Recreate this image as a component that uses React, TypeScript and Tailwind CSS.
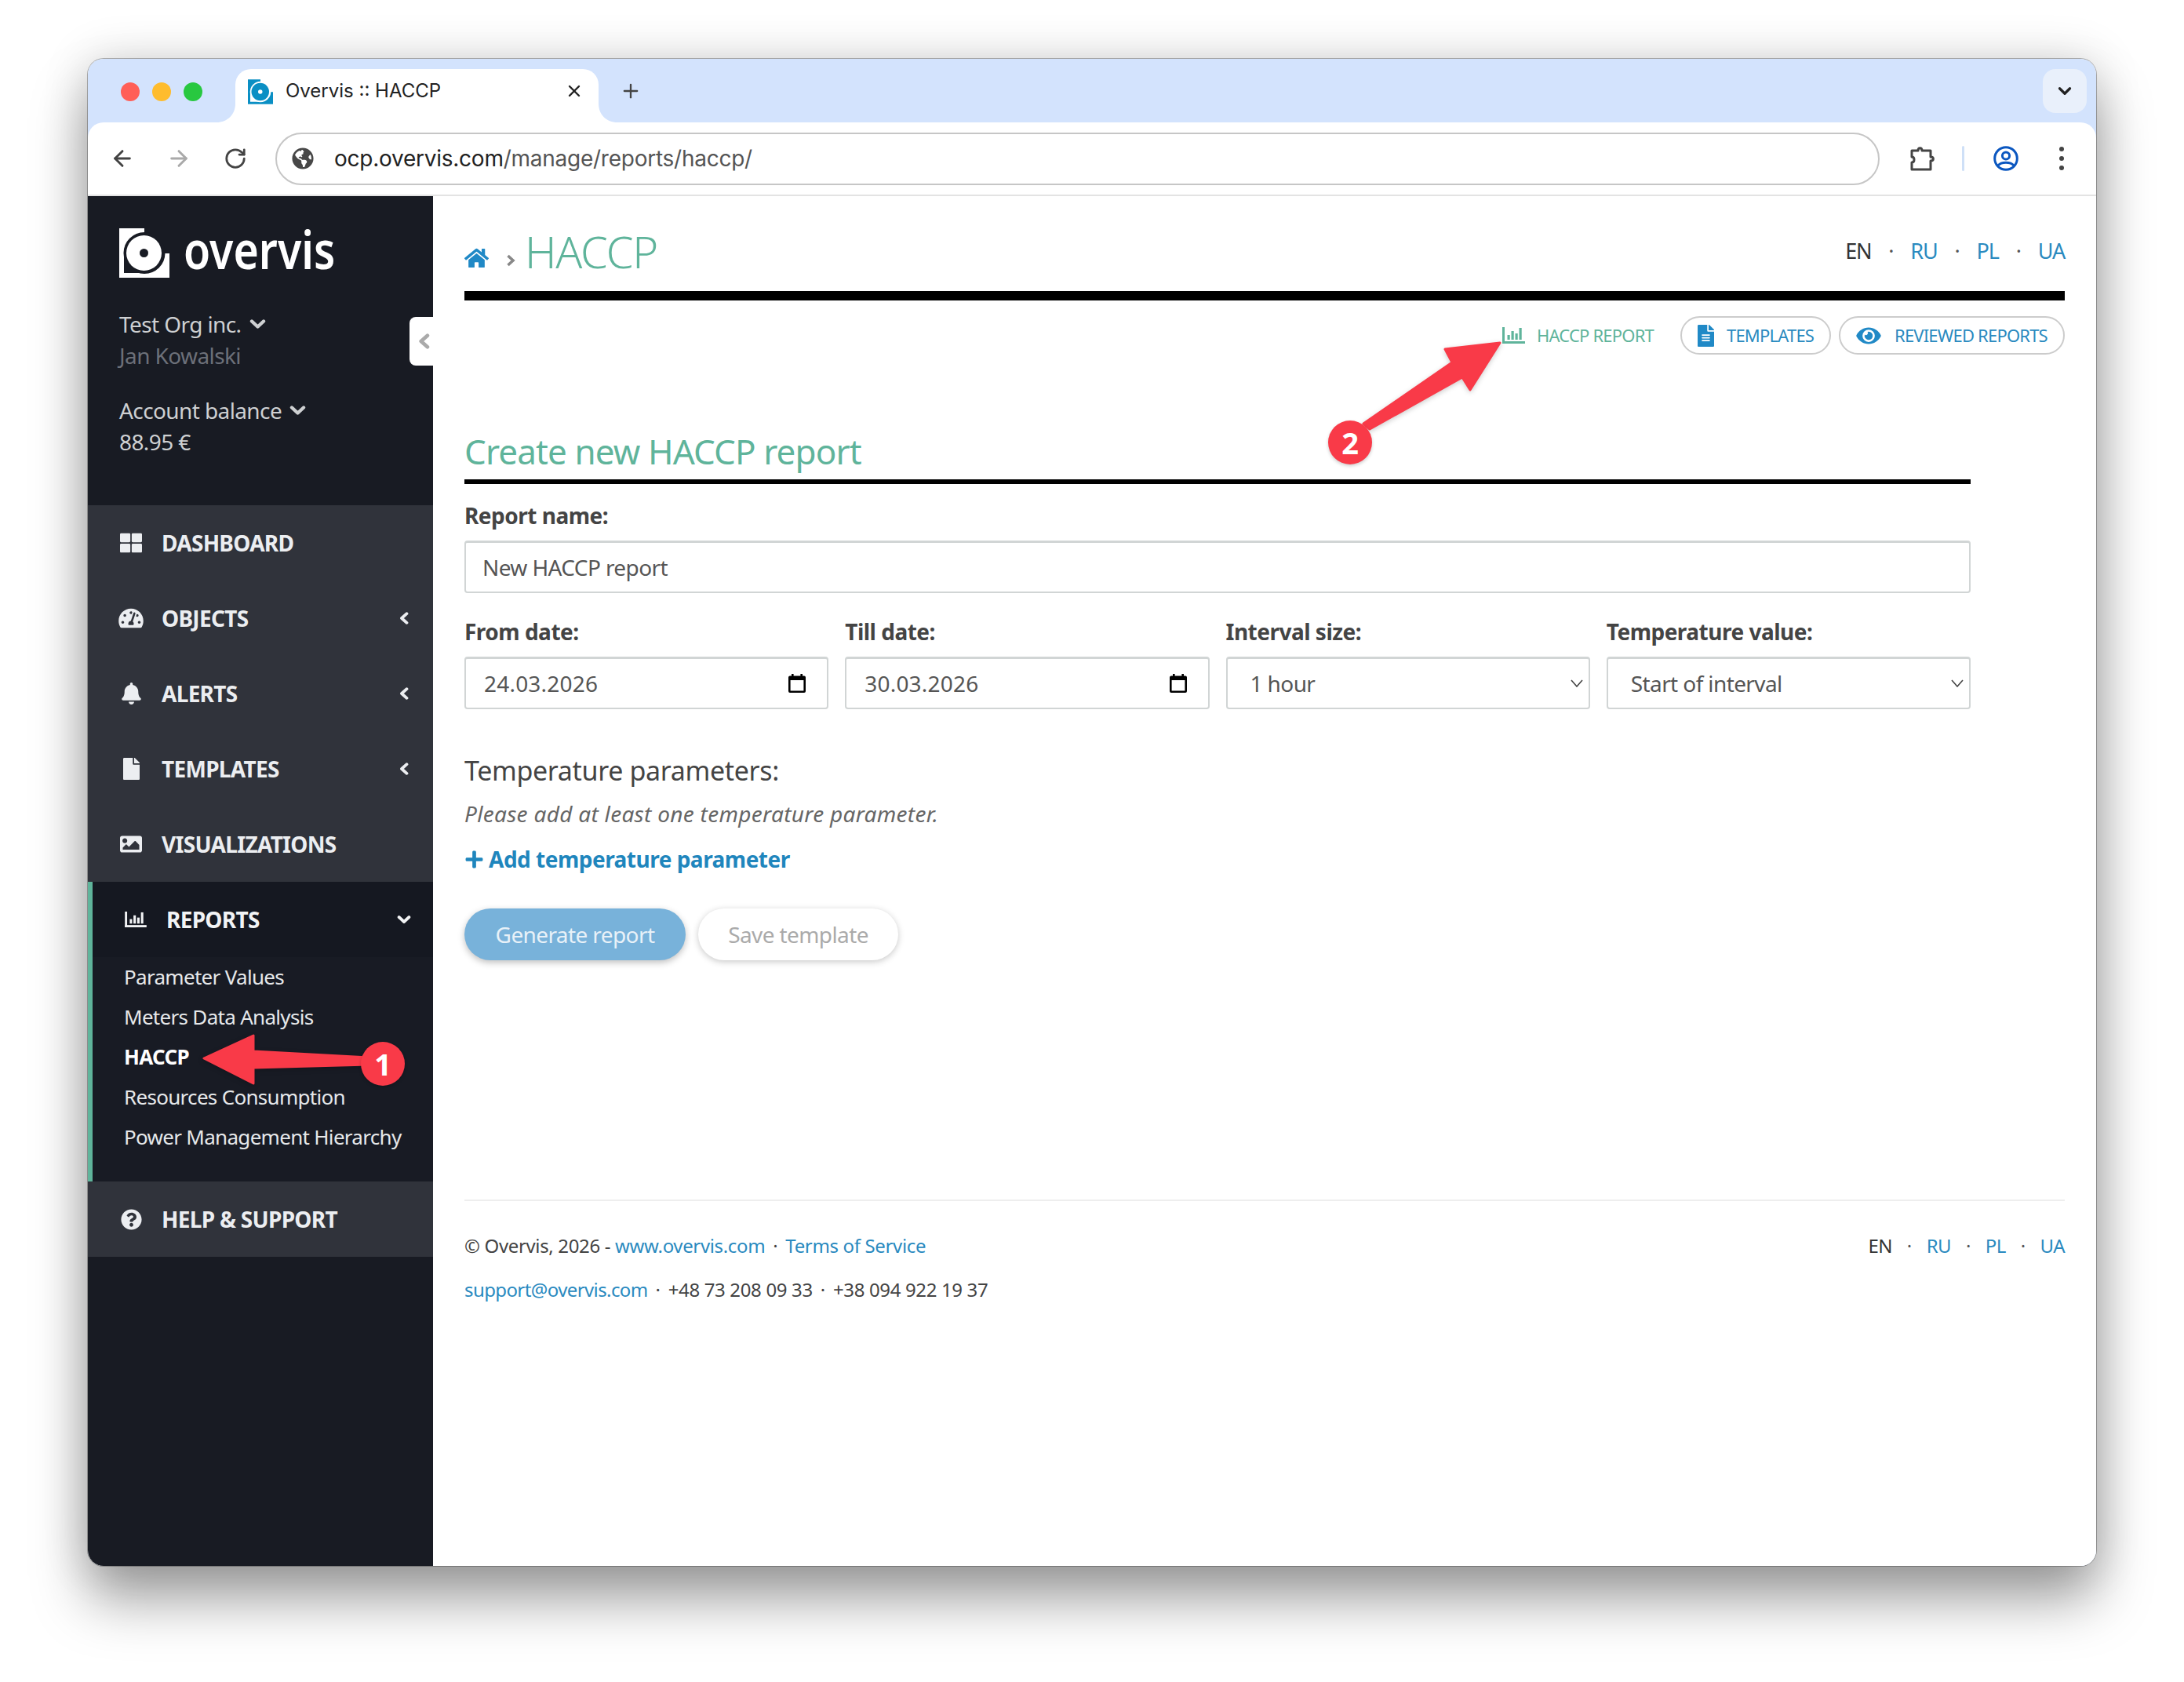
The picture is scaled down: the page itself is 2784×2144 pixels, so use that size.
import React from "react";
import {
  FaThLarge, FaTachometerAlt, FaBell, FaFile, FaImage, FaQuestionCircle,
  FaHome, FaFileAlt, FaEye, FaPlus, FaGlobeAmericas,
} from "react-icons/fa";
import { ArrowLeft, ArrowRight, RotateCw, X, Plus, ChevronDown } from "lucide-react";

function LogoMark({ fg, bg, className }: { fg: string; bg: string; className: string }) {
  return (
    <svg viewBox="0 0 64 63" className={className}>
      <path d="M0 0H32V32H64V63H0Z" fill={fg} />
      <circle cx="32" cy="31.5" r="26.5" fill={bg} />
      <rect x="6" y="31" width="26" height="26" fill={bg} />
      <circle cx="31.5" cy="31.5" r="22.5" fill={fg} />
      <circle cx="31.5" cy="31.5" r="5.5" fill={bg} />
    </svg>
  );
}

function BarsIcon({ className }: { className: string }) {
  return (
    <svg viewBox="0 0 29 21" className={className} fill="currentColor">
      <rect x="0" y="0" width="3" height="21" />
      <rect x="0" y="18" width="29" height="3" />
      <rect x="6.5" y="10" width="3.2" height="6" />
      <rect x="11.5" y="5" width="3.2" height="11" />
      <rect x="16.5" y="8" width="3.2" height="8" />
      <rect x="21.5" y="1" width="3.2" height="15" />
    </svg>
  );
}

function CalendarIcon() {
  return (
    <svg viewBox="0 0 22 24" className="w-[22px] h-[24px] shrink-0" fill="#000">
      <rect x="4" y="0" width="2.6" height="4" />
      <rect x="15.4" y="0" width="2.6" height="4" />
      <path fillRule="evenodd" d="M2 2.5H20A2 2 0 0 1 22 4.5V22A2 2 0 0 1 20 24H2A2 2 0 0 1 0 22V4.5A2 2 0 0 1 2 2.5ZM2.6 8V21.4H19.4V8Z" />
    </svg>
  );
}

function ChevLeft({ className }: { className: string }) {
  return (
    <svg viewBox="0 0 12 16" className={className} fill="none" stroke="currentColor" strokeWidth="3.8" strokeLinecap="round" strokeLinejoin="round">
      <path d="M9.5 2.2L3 8L9.5 13.8" />
    </svg>
  );
}

function ChevDown({ className }: { className: string }) {
  return (
    <svg viewBox="0 0 21 14" className={className} fill="none" stroke="currentColor" strokeWidth="4.4" strokeLinecap="round" strokeLinejoin="round">
      <path d="M3 3.5L10.5 10.5L18 3.5" />
    </svg>
  );
}

function MenuItem({ icon, label, chevron }: { icon: React.ReactNode; label: string; chevron?: boolean }) {
  return (
    <div className="h-[96px] bg-[#30333b] flex items-center pl-[40px] pr-[31px]">
      <div className="w-[30px] flex justify-center shrink-0">{icon}</div>
      <span className="ml-[24px] text-[28px] font-bold tracking-[-0.7px] text-[#eceef1]">{label}</span>
      {chevron && <ChevLeft className="ml-auto w-[12px] h-[16px] text-[#eceef1]" />}
    </div>
  );
}

function Field({ label, value, kind }: { label: string; value: string; kind: "date" | "select" }) {
  return (
    <div>
      <div className="h-[40px] leading-[40px] text-[28px] font-bold tracking-[-0.5px] text-[#444]">{label}</div>
      <div className={"mt-[12px] h-[67px] rounded-[4px] border-2 border-[#d1d5d5] border-t-[3px] flex items-center bg-white " + (kind === "date" ? "pl-[23px] pr-[27px]" : "pl-[29px] pr-[7px]")}>
        <span className={"text-[28px] text-[#555] " + (kind === "date" ? "tracking-[0.2px]" : "")}>{value}</span>
        <div className="ml-auto">
          {kind === "date" ? (
            <CalendarIcon />
          ) : (
            <svg viewBox="0 0 16 10" className="w-[16px] h-[10px]" fill="none" stroke="#444" strokeWidth="1.6"><path d="M1 1L8 9L15 1" /></svg>
          )}
        </div>
      </div>
    </div>
  );
}

function Lang({ size, gap, className }: { size: string; gap: string; className?: string }) {
  const dot = <span className="text-[#555]">·</span>;
  const link = "text-[#2a8abf]";
  return (
    <div className={`flex items-center ${size} ${gap} ${className ?? ""}`}>
      <span className="text-[#333]">EN</span>
      {dot}
      <span className={link}>RU</span>
      {dot}
      <span className={link}>PL</span>
      {dot}
      <span className={link}>UA</span>
    </div>
  );
}

function SubItem({ label, bold }: { label: string; bold?: boolean }) {
  return (
    <div className={"h-[51px] leading-[51px] text-[26px] tracking-[-0.7px] " + (bold ? "font-bold text-white" : "text-[#e6e8ea]")}>{label}</div>
  );
}

export default function App() {
  return (
    <div className="relative w-[2784px] h-[2144px] bg-white overflow-hidden pl-[112px] pt-[75px] tracking-[-0.6px] font-['Noto_Sans',sans-serif]">
      <div className="w-[2560px] h-[1921px] rounded-[20px] shadow-[0_44px_70px_rgba(0,0,0,0.36),0_0_60px_rgba(0,0,0,0.16),0_0_0_1px_rgba(0,0,0,0.28)]">
        <div className="w-full h-full rounded-[20px] overflow-hidden bg-[#d3e3fd] flex flex-col">
          {/* tab strip */}
          <div className="h-[81px] shrink-0 flex pt-[13px] relative tracking-normal">
            <div className="flex items-center gap-[16px] pl-[42px] h-[58px]">
              <span className="w-[24px] h-[24px] rounded-full bg-[#ff5f57]" />
              <span className="w-[24px] h-[24px] rounded-full bg-[#febc2e]" />
              <span className="w-[24px] h-[24px] rounded-full bg-[#28c840]" />
            </div>
            <div className="relative ml-[42px] w-[463px] h-[68px] bg-white rounded-t-[20px] flex items-start pt-[13px] pl-[16px] pr-[19px] font-['Inter',sans-serif]">
              <LogoMark fg="#0a8fc4" bg="#ffffff" className="w-[32px] h-[32px] shrink-0" />
              <span className="ml-[16px] text-[24px] leading-[30px] text-[#222]">Overvis :: HACCP</span>
              <X className="ml-auto mt-[3px] w-[24px] h-[24px] text-[#222]" strokeWidth={2.4} />
              <svg viewBox="0 0 24 24" className="absolute bottom-0 left-[-24px] w-[24px] h-[24px]"><path d="M24 0V24H0C14 24 24 14 24 0Z" fill="#fff" /></svg>
              <svg viewBox="0 0 24 24" className="absolute bottom-0 right-[-24px] w-[24px] h-[24px]"><path d="M0 0V24H24C10 24 0 14 0 0Z" fill="#fff" /></svg>
            </div>
            <div className="ml-[27px] h-[56px] flex items-center">
              <Plus className="w-[28px] h-[28px] text-[#444]" strokeWidth={2} />
            </div>
            <div className="ml-auto mr-[12px] w-[56px] h-[56px] rounded-[16px] bg-[#e9f0fb] flex items-center justify-center">
              <ChevronDown className="w-[26px] h-[26px] text-[#222]" strokeWidth={3} />
            </div>
          </div>
          {/* toolbar */}
          <div className="h-[94px] shrink-0 bg-white rounded-t-[20px] border-b-2 border-[#e3e3e3] flex items-center pl-[28px] pr-[41px] relative tracking-normal">
            <ArrowLeft className="w-[32px] h-[32px] text-[#444]" strokeWidth={2.2} />
            <ArrowRight className="ml-[40px] w-[32px] h-[32px] text-[#aaa]" strokeWidth={2.2} />
            <RotateCw className="ml-[41px] w-[30px] h-[30px] text-[#444]" strokeWidth={2.2} />
            <div className="ml-[36px] w-[2045px] h-[67px] rounded-full border-2 border-[#c6c6c6] flex items-center pl-[19px]">
              <FaGlobeAmericas className="w-[28px] h-[28px] text-[#474747]" />
              <span className="ml-[26px] text-[28px] font-['Inter',sans-serif] text-[#222] tracking-[-0.25px]">
                ocp.overvis.com<span className="text-[#555]">/manage/reports/haccp/</span>
              </span>
            </div>
            <svg viewBox="0 0 32 32" className="ml-[38px] w-[32px] h-[32px]" fill="none" stroke="#444" strokeWidth="3" strokeLinejoin="round">
              <path d="M3 6H11C11 1.5 16 1.5 16 6H27V14C31.5 14 31.5 19 27 19V30H3V21C7 21 7 14 3 14Z" />
            </svg>
            <div className="ml-[35px] w-[3px] h-[32px] rounded-full bg-[#cfe0f7]" />
            <svg viewBox="0 0 32 32" className="ml-[37px] w-[32px] h-[32px]" fill="none" stroke="#0b57c0" strokeWidth="3">
              <circle cx="16" cy="16" r="14.3" />
              <circle cx="16" cy="12.5" r="4.6" />
              <path d="M6 25C10 20 22 20 26 25" />
            </svg>
            <div className="ml-auto flex flex-col gap-[6px]">
              <span className="w-[6px] h-[6px] rounded-full bg-[#444]" />
              <span className="w-[6px] h-[6px] rounded-full bg-[#444]" />
              <span className="w-[6px] h-[6px] rounded-full bg-[#444]" />
            </div>
          </div>
          {/* page */}
          <div className="flex flex-1 bg-white min-h-0">
            <aside className="relative w-[440px] shrink-0 bg-[#181b23] flex flex-col">
              <div className="absolute right-0 top-[154px] w-[30px] h-[62px] bg-white rounded-l-[8px] flex items-center justify-center pl-[6px]">
                <ChevLeft className="w-[15px] h-[22px] text-[#aaaaaa]" />
              </div>
              <div className="pl-[40px] pt-[41px]">
                <div className="flex items-center h-[63px]">
                  <LogoMark fg="#ffffff" bg="#181b23" className="w-[64px] h-[63px] shrink-0" />
                  <span className="ml-[18px] -mt-[10px] text-[66px] leading-[63px] tracking-normal font-semibold text-white origin-left scale-x-[0.84] inline-block">overvis</span>
                </div>
                <div className="mt-[39px] h-[40px] leading-[40px] text-[28px] text-[#ced0d2] flex items-center">
                  Test Org inc.
                  <ChevDown className="ml-[10px] w-[21px] h-[14px] text-[#ced0d2]" />
                </div>
                <div className="h-[40px] leading-[40px] text-[28px] text-[#6c7079]">Jan Kowalski</div>
                <div className="mt-[30px] h-[40px] leading-[40px] text-[28px] text-[#ced0d2] flex items-center">
                  Account balance
                  <ChevDown className="ml-[10px] w-[21px] h-[14px] text-[#ced0d2]" />
                </div>
                <div className="h-[40px] leading-[40px] text-[28px] text-[#ced0d2]">88.95 €</div>
              </div>
              <nav className="mt-[61px]">
                <MenuItem icon={<FaThLarge className="w-[28px] h-[28px] text-[#eceef1]" />} label="DASHBOARD" />
                <MenuItem icon={<FaTachometerAlt className="w-[32px] h-[28px] shrink-0 text-[#eceef1]" />} label="OBJECTS" chevron />
                <MenuItem icon={<FaBell className="w-[25px] h-[28px] text-[#eceef1]" />} label="ALERTS" chevron />
                <MenuItem icon={<FaFile className="w-[21px] h-[28px] text-[#eceef1]" />} label="TEMPLATES" chevron />
                <MenuItem icon={<FaImage className="w-[28px] h-[28px] text-[#eceef1]" />} label="VISUALIZATIONS" />
                <div className="border-l-[6px] border-[#5fb49b] h-[382px] bg-[#181b24]">
                  <div className="h-[96px] bg-[#151821] flex items-center pl-[41px] pr-[28px]">
                    <BarsIcon className="w-[28px] h-[20px] text-[#f2f3f5]" />
                    <span className="ml-[25px] text-[28px] font-bold tracking-[-0.7px] text-[#f2f3f5]">REPORTS</span>
                    <ChevDown className="ml-auto w-[18px] h-[12px] text-[#f2f3f5]" />
                  </div>
                  <div className="pl-[40px]">
                    <SubItem label="Parameter Values" />
                    <SubItem label="Meters Data Analysis" />
                    <SubItem label="HACCP" bold />
                    <SubItem label="Resources Consumption" />
                    <SubItem label="Power Management Hierarchy" />
                  </div>
                </div>
                <MenuItem icon={<FaQuestionCircle className="w-[27px] h-[27px] text-[#eceef1]" />} label="HELP & SUPPORT" />
              </nav>
            </aside>
            <main className="flex-1 min-w-0 px-[40px]">
              <div className="h-[121px] pt-[19px] flex items-center justify-between">
                <div className="flex items-center">
                  <FaHome className="mt-[17px] w-[31px] h-[28px] text-[#2089c6]" />
                  <svg viewBox="0 0 12 16" className="ml-[22px] mt-[24px] w-[12px] h-[16px] text-[#888888]" fill="none" stroke="currentColor" strokeWidth="3.6"><path d="M2.5 2L9 8L2.5 14" /></svg>
                  <h1 className="ml-[12px] text-[56px] leading-[70px] tracking-[-1.2px] font-light text-[#5fb49b]">HACCP</h1>
                </div>
                <Lang size="text-[27px] tracking-[-1.2px]" gap="gap-[22px]" />
              </div>
              <div className="h-[12px] bg-black" />
              <div className="mt-[20px] h-[49px] flex justify-end gap-[10px] text-[22px] tracking-[-0.8px]">
                <div className="h-full flex items-center pr-[24px] text-[#5fb49b]">
                  <BarsIcon className="w-[29px] h-[21px]" />
                  <span className="ml-[15px]">HACCP REPORT</span>
                </div>
                <div className="h-full w-[192px] rounded-full border-2 border-[#cccccc] flex items-center pl-[20px] text-[#2a8abf]">
                  <FaFileAlt className="w-[21px] h-[28px] text-[#2089c6]" />
                  <span className="ml-[16px]">TEMPLATES</span>
                </div>
                <div className="h-full w-[288px] rounded-full border-2 border-[#cccccc] flex items-center pl-[20px] text-[#2a8abf]">
                  <FaEye className="w-[32px] h-[28px] text-[#2089c6]" />
                  <span className="ml-[17px]">REVIEWED REPORTS</span>
                </div>
              </div>
              <div className="w-[1920px]">
                <h2 className="mt-[88px] h-[77px] leading-[71px] border-b-[6px] border-black text-[44px] tracking-[-0.9px] text-[#5fb49b]">Create new HACCP report</h2>
                <div className="mt-[20px] h-[40px] leading-[40px] text-[28px] font-bold tracking-[-0.5px] text-[#444]">Report name:</div>
                <div className="mt-[12px] h-[67px] rounded-[4px] border-2 border-[#d1d5d5] border-t-[3px] flex items-center pl-[21px]">
                  <span className="text-[28px] text-[#555]">New HACCP report</span>
                </div>
                <div className="mt-[29px] grid grid-cols-4 gap-x-[21px]">
                  <Field label="From date:" value="24.03.2026" kind="date" />
                  <Field label="Till date:" value="30.03.2026" kind="date" />
                  <Field label="Interval size:" value="1 hour" kind="select" />
                  <Field label="Temperature value:" value="Start of interval" kind="select" />
                </div>
                <div className="mt-[56px] h-[44px] leading-[44px] text-[34px] tracking-[-0.35px] text-[#444]">Temperature parameters:</div>
                <div className="mt-[13px] h-[40px] leading-[40px] text-[28px] italic tracking-[0.3px] text-[#666]">Please add at least one temperature parameter.</div>
                <div className="mt-[18px] h-[40px] flex items-center text-[#1f86bd]">
                  <FaPlus className="w-[25px] h-[25px]" />
                  <span className="ml-[6px] text-[28px] leading-[40px] font-bold tracking-[-0.5px]">Add temperature parameter</span>
                </div>
                <div className="mt-[43px] flex gap-[16px]">
                  <div className="w-[282px] h-[66px] rounded-full bg-[#78b2da] flex items-center justify-center text-[28px] text-[#e8f1f8] shadow-[0_3px_8px_rgba(0,0,0,0.25)]">Generate report</div>
                  <div className="w-[255px] h-[66px] rounded-full bg-white flex items-center justify-center text-[28px] text-[#aaaaaa] shadow-[0_2px_8px_rgba(0,0,0,0.22)]">Save template</div>
                </div>
              </div>
              <div className="mt-[305px] border-t-2 border-[#eeeeee] pt-[39px] text-[24px] tracking-[-0.35px] text-[#444]">
                <div className="flex justify-between items-center h-[36px]">
                  <div className="flex items-center whitespace-pre">
                    <span>© Overvis, 2026 - </span>
                    <span className="text-[#2a8abf]">www.overvis.com</span>
                    <span className="mx-[10px]">·</span>
                    <span className="text-[#2a8abf]">Terms of Service</span>
                  </div>
                  <Lang size="text-[24px] tracking-[-0.6px]" gap="gap-[19px]" />
                </div>
                <div className="mt-[20px] h-[36px] flex items-center whitespace-pre">
                  <span className="text-[#2a8abf] tracking-[-0.6px]">support@overvis.com</span>
                  <span className="mx-[10px]">·</span>
                  <span>+48 73 208 09 33</span>
                  <span className="mx-[10px]">·</span>
                  <span>+38 094 922 19 37</span>
                </div>
              </div>
            </main>
          </div>
        </div>
      </div>
      {/* annotation arrows */}
      <svg viewBox="0 0 2784 2144" className="absolute left-0 top-0 w-[2784px] h-[2144px] pointer-events-none drop-shadow-[0_2px_3px_rgba(0,0,0,0.2)]">
        <path d="M260 1349L323 1320L323 1340L470 1348L470 1357L323 1361L323 1381Z" fill="#f93a48" stroke="#f93a48" strokeWidth="3" strokeLinejoin="round" />
        <path d="M1912 437L1842 445L1851 462L1738 540L1746 547L1864 481L1874 497Z" fill="#f93a48" stroke="#f93a48" strokeWidth="3" strokeLinejoin="round" />
      </svg>
      <div className="absolute left-[460px] top-[1328px] w-[56px] h-[56px] rounded-full bg-[#f93a48] flex items-center justify-center text-[38px] font-bold tracking-normal text-white shadow-[0_2px_4px_rgba(0,0,0,0.2)]">1</div>
      <div className="absolute left-[1693px] top-[536px] w-[56px] h-[56px] rounded-full bg-[#f93a48] flex items-center justify-center text-[38px] font-bold tracking-normal text-white shadow-[0_2px_4px_rgba(0,0,0,0.2)]">2</div>
    </div>
  );
}
